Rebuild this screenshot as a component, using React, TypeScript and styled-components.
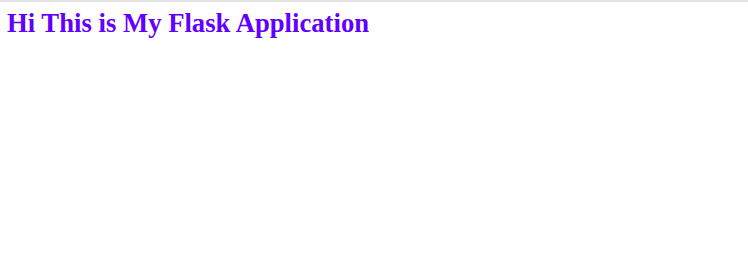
import styled, { createGlobalStyle } from "styled-components"

const GlobalStyle = createGlobalStyle`
    html, body {
        margin: 0;
        padding: 0;
        background: #ffffff;
    }
`

const Page = styled.main`
    display: flex;
    flex-direction: column;
    border-top: 2px solid #e3e3e3;
    padding: 6px 7px;
    font-family: "Liberation Serif", "Times New Roman", serif;
`

const Heading = styled.h1`
    margin: 0;
    font-size: 26.7px;
    font-weight: bold;
    line-height: 30px;
    color: #6200ff;
`

export default function App() {
    return (
        <>
            <GlobalStyle />
            <Page>
                <Heading>Hi This is My Flask Application</Heading>
            </Page>
        </>
    )
}
